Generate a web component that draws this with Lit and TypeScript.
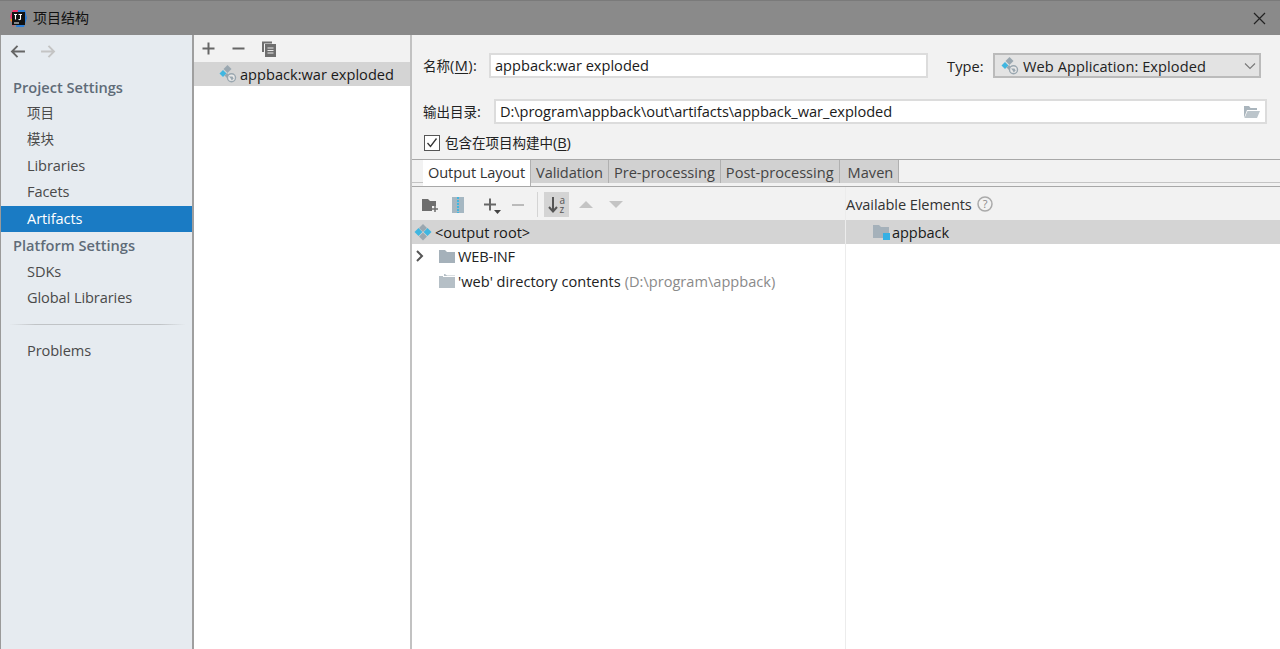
import { LitElement, html, css, svg } from "lit";
import { customElement } from "lit/decorators.js";

const artifactIcon = (globe: boolean) => html`<svg class="ai" width="18" height="18" viewBox="0 0 18 18">
  ${globe
    ? svg`<path d="M8.500 0 12.500 4 8.500 8 4.500 4z" fill="#9aa7b0"/>
          <path d="M4 5 7.500 8.500 4 12 .5 8.500z" fill="#40b6e0"/>
          <path d="M8 8 10.500 10.500 8 13 5.500 10.500z" fill="#9aa7b0"/>
          <circle cx="12.500" cy="12.800" r="4.700" fill="#9aa7b0"/><circle cx="12.500" cy="12.800" r="3.300" fill="#e8e8e8"/>
          <path d="M10 11.500h3.500l1.200 2-2 2-1-2z" fill="#9aa7b0"/>`
    : svg`<path d="M9 1 13 5 9 9 5 5z" fill="#9aa7b0"/>
          <path d="M4.500 5 8.500 9 4.500 13 .5 9z" fill="#40b6e0"/>
          <path d="M13.500 5 17.500 9 13.500 13 9.500 9z" fill="#40b6e0"/>
          <path d="M9 9.500 13 13.500 9 17.500 5 13.500z" fill="#9aa7b0"/>`}
</svg>`;

const folder = () => html`<svg width="18" height="16" viewBox="0 0 18 16">
  <path d="M1 2h6l2 2h8v11H1z" fill="#a5b1ba"/>
</svg>`;

const copyIcon = html`<svg width="16" height="16" viewBox="0 0 16 16" fill="none">
  <path d="M2 11V1.500h9" stroke="#6e6e6e" stroke-width="2"/>
  <rect x="4" y="3" width="11" height="13" fill="#6e6e6e"/>
  <path d="M6.500 7h6M6.500 9.500h6M6.500 12h6" stroke="#e9e9e9"/>
</svg>`;

@customElement("app-root")
export class AppRoot extends LitElement {
  static styles = css`
    :host {
      display: flex;
      flex-direction: column;
      width: 1280px;
      height: 649px;
      overflow: hidden;
      background: #f2f2f2;
      color: #222;
      font: 14.6px/20px "Open Sans", "Noto Sans CJK SC", sans-serif;
      letter-spacing: -0.1px;
    }
    .cjk { font-size: 13.5px; letter-spacing: 0; }
    .title {
      height: 35px;
      flex: none;
      background: #8a8a8a;
      display: flex;
      align-items: center;
      padding: 0 14px 0 10px;
      gap: 6px;
      color: #111;
      font-size: 14px;
      letter-spacing: 0;
      box-sizing: border-box;
      border-top: 1px solid #7a7a7a;
    }
    .title .name { flex: 1; }
    .main { flex: 1; display: flex; min-height: 0; border-left: 1px solid #9a9a9a; }
    .side {
      width: 191px;
      flex: none;
      background: #e6ebf0;
      border-right: 2px solid #9f9f9f;
      display: flex;
      flex-direction: column;
    }
    .nav { height: 31px; box-sizing: border-box; padding: 2px 0 0 9px; display: flex; align-items: center; gap: 14px; margin-bottom: 9px; }
    .hd { height: 26px; line-height: 24px; padding-left: 12px; font-weight: 600; color: #5f6b78; letter-spacing: 0; }
    .it { height: 26px; line-height: 24px; padding-left: 26px; color: #4a4a4a; }
    .it.sel { background: #1a7bc4; color: #fff; margin: 1px 0; }
    .sep { height: 1px; background: linear-gradient(90deg, #e6ebf0, #c0c3c6 15%, #c0c3c6 85%, #e6ebf0); margin: 13px 6px 13px 8px; }
    .mid { width: 216px; flex: none; background: #fff; border-right: 2px solid #c2c2c2; display: flex; flex-direction: column; }
    .tb { height: 27px; background: #f2f2f2; display: flex; align-items: center; gap: 15px; padding-left: 7px; }
    .row-sel { height: 24px; background: #d4d4d4; display: flex; align-items: center; color: #1a1a1a; }
    .mid .row-sel { padding-left: 25px; gap: 3px; letter-spacing: 0; }
    .right { flex: 1; display: flex; flex-direction: column; min-width: 0; }
    .form { height: 124px; flex: none; padding: 18px 13px 0 11px; box-sizing: border-box; }
    .line { display: flex; align-items: center; height: 25px; }
    .lab { flex: none; }
    .a .lab { width: 66px; letter-spacing: 0.4px; }
    .b .lab { width: 71px; }
    .input { height: 25px; box-sizing: border-box; border: 2px solid #dcdcdc; background: #fff; line-height: 21px; padding-left: 4px; color: #1a1a1a; letter-spacing: 0; }
    .a .input { width: 439px; }
    .type { margin-left: 19px; width: 46px; flex: none; letter-spacing: 0.1px; }
    .combo { width: 268px; height: 25px; box-sizing: border-box; background: #e3e3e3; border: 2px solid #bbb; display: flex; align-items: center; padding: 0 3px 0 6px; gap: 4px; letter-spacing: 0.06px; }
    .combo span { flex: 1; }
    .b { margin-top: 21px; }
    .b .input { flex: 1; display: flex; align-items: center; justify-content: space-between; padding-right: 5px; letter-spacing: -0.06px; }
    .chk { margin-top: 8px; display: flex; align-items: center; gap: 5px; }
    .box { width: 14px; height: 14px; border: 1px solid #555; background: #fff; display: flex; margin-left: 1px; }
    .tabs {
      height: 28px; flex: none; box-sizing: border-box;
      border-top: 1px solid #a8a8a8; border-bottom: 1px solid #a8a8a8;
      background: linear-gradient(#c4c4c4, #c4c4c4) 0 22px / 100% 1px no-repeat;
      padding-left: 11px; display: flex; align-items: flex-start; letter-spacing: 0;
    }
    .tab { height: 23px; line-height: 24px; padding: 0 5px; background: #d1d1d1; color: #444; border-right: 1px solid #b0b0b0; }
    .tab.on { background: #fff; color: #333; height: 26px; letter-spacing: -0.1px; }
    .tab.vd { letter-spacing: -0.1px; }
    .tab.mv { padding: 0 5px 0 8px; }
    .layout { flex: 1; min-height: 0; display: flex; }
    .l { width: 433px; flex: none; background: #fff; border-right: 1px solid #ececec; display: flex; flex-direction: column; }
    .r { flex: 1; background: #fff; display: flex; flex-direction: column; }
    .tb2 { height: 33px; box-sizing: border-box; flex: none; background: #f2f2f2; display: flex; align-items: center; padding-left: 9px; }
    .tb2.ic { padding-top: 2px; }
    .tb2 > .m12 { margin-left: 12px; }
    .tb2 > .m18 { margin-left: 18px; }
    .tb2 > .m8 { margin-left: 8px; }
    .tb2 > .m7 { margin-left: 6px; }
    .tb2 > .m9 { margin-left: 9px; }
    .tb2 > .m14 { margin-left: 14px; }
    .tb2.r2 { padding-left: 0; gap: 5px; color: #333; }
    .sort { background: #d4d4d4; width: 25px; height: 25px; display: flex; align-items: center; justify-content: center; }
    .vsep { width: 1px; height: 25px; background: #d4d4d4; }
    .l .row-sel { padding-left: 2px; gap: 3px; letter-spacing: 0; }
    .r .row-sel { padding-left: 26px; }
    .tr { height: 25px; box-sizing: border-box; padding: 0 0 2px 3px; display: flex; align-items: center; color: #222; letter-spacing: 0; }
    .tr .sp { width: 23px; display: flex; }
    .tr .txt { margin-left: 2px; }
    .tr .wi { letter-spacing: -0.2px; }
    .gray { color: #8a8a8a; margin-left: 4px; }
    u { text-underline-offset: 2px; }
    .ov { overflow: visible; }
  `;

  render() {
    return html`
      <div class="title">
        <svg width="17" height="17" viewBox="0 0 17 17">
          <path d="M0 6 3 0h6L3 17z" fill="#f0386b"/><path d="M8 0h7l2 8-3 9H6z" fill="#2a7dd8"/><path d="M0 10l4-3v7z" fill="#f58a1f"/>
          <rect x="2" y="2" width="13" height="13" fill="#111"/>
          <path d="M4 4.500h3M5.500 4.500v5M8.500 4.500h3.500M10.500 4.500v4.500q0 .8-2 .5" stroke="#fff" fill="none" stroke-width="1.100"/>
          <path d="M4 13h5" stroke="#fff"/>
        </svg>
        <span class="name">项目结构</span>
        <svg width="13" height="13" viewBox="0 0 13 13"><path d="M1 1l11 11M12 1 1 12" stroke="#222" stroke-width="1.200"/></svg>
      </div>
      <div class="main">
        <div class="side">
          <div class="nav">
            <svg width="16" height="13" viewBox="0 0 17 14" fill="none" stroke="#666" stroke-width="2"><path d="M16 7H2M8 1 2 7l6 6"/></svg>
            <svg width="16" height="13" viewBox="0 0 17 14" fill="none" stroke="#c4c4c4" stroke-width="2"><path d="M1 7h14M9 1l6 6-6 6"/></svg>
          </div>
          <div class="hd">Project Settings</div>
          <div class="it cjk">项目</div>
          <div class="it cjk">模块</div>
          <div class="it">Libraries</div>
          <div class="it">Facets</div>
          <div class="it sel">Artifacts</div>
          <div class="hd">Platform Settings</div>
          <div class="it">SDKs</div>
          <div class="it">Global Libraries</div>
          <div class="sep"></div>
          <div class="it">Problems</div>
        </div>
        <div class="mid">
          <div class="tb">
            <svg width="15" height="15" viewBox="0 0 15 15"><path d="M7.500 1.500v12M1.500 7.500h12" stroke="#666" stroke-width="2"/></svg>
            <svg width="15" height="15" viewBox="0 0 15 15"><path d="M1.500 7.500h12" stroke="#666" stroke-width="2"/></svg>
            ${copyIcon}
          </div>
          <div class="row-sel">${artifactIcon(true)}<span>appback:war exploded</span></div>
        </div>
        <div class="right">
          <div class="form">
            <div class="line a">
              <span class="lab"><span class="cjk">名称</span>(<u>M</u>):</span>
              <div class="input">appback:war exploded</div>
              <span class="type">Type:</span>
              <div class="combo">${artifactIcon(true)}<span>Web Application: Exploded</span>
                <svg width="12" height="8" viewBox="0 0 12 8" fill="none" stroke="#777" stroke-width="1.100"><path d="M1 1.500l5 5 5-5"/></svg>
              </div>
            </div>
            <div class="line b">
              <span class="lab"><span class="cjk">输出目录</span>:</span>
              <div class="input">D:\\program\\appback\\out\\artifacts\\appback_war_exploded
                <svg width="17" height="14" viewBox="0 0 17 14"><path d="M1 1h5l1.500 2H14v2H4L1 13z" fill="#aab5bd"/><path d="M4.500 6H17l-3 7H1.500z" fill="#bcc5cb"/></svg>
              </div>
            </div>
            <div class="chk">
              <div class="box"><svg width="14" height="14" viewBox="0 0 14 14" fill="none" stroke="#333" stroke-width="1.300"><path d="M2.500 7l3 3.500 6-8"/></svg></div>
              <span><span class="cjk">包含在项目构建中</span>(<u>B</u>)</span>
            </div>
          </div>
          <div class="tabs">
            <div class="tab on">Output Layout</div>
            <div class="tab vd">Validation</div>
            <div class="tab">Pre-processing</div>
            <div class="tab">Post-processing</div>
            <div class="tab mv">Maven</div>
          </div>
          <div class="layout">
            <div class="l">
              <div class="tb2 ic">
                <svg width="18" height="16" viewBox="0 0 18 16"><path d="M1 2h6l2 2h6v5h-4v5H1z" fill="#6e6e6e"/><path d="M14 9v6M11 12h6" stroke="#6e6e6e" stroke-width="1.500"/></svg>
                <svg class="m12" width="14" height="18" viewBox="0 0 14 18"><rect x="1" y="1" width="12" height="16" fill="#a5b7c2"/><path d="M7 1v16" stroke="#40b6e0" stroke-width="2" stroke-dasharray="2 1"/></svg>
                <svg class="m18" width="20" height="18" viewBox="0 0 20 18"><path d="M7 2.500v12M1 8.500h12" stroke="#666" stroke-width="2"/><path d="M11 14h7l-3.500 4z" fill="#444"/></svg>
                <svg class="m8" width="14" height="14" viewBox="0 0 14 14"><path d="M1 7h12" stroke="#bbb" stroke-width="2"/></svg>
                <div class="vsep m12"></div>
                <div class="sort m7">
                  <svg class="ov" width="20" height="20" viewBox="0 0 20 20"><path d="M6 2v14M2 12l4 4.500 4-4.500" fill="none" stroke="#555" stroke-width="2"/><text x="12.500" y="8.500" font-size="10" fill="#555" font-family="Open Sans">a</text><text x="12.500" y="18" font-size="10" fill="#555" font-family="Open Sans">z</text></svg>
                </div>
                <svg class="m9" width="16" height="9" viewBox="0 0 16 9"><path d="M8 1l7 7H1z" fill="#c4c4c4"/></svg>
                <svg class="m14" width="16" height="9" viewBox="0 0 16 9"><path d="M8 8l7-7H1z" fill="#c4c4c4"/></svg>
              </div>
              <div class="row-sel">${artifactIcon(false)}<span>&lt;output root&gt;</span></div>
              <div class="tr">
                <span class="sp"><svg width="10" height="12" viewBox="0 0 10 12" fill="none" stroke="#555" stroke-width="2"><path d="M2 1l5 5-5 5"/></svg></span>
                ${folder()}<span class="txt wi">WEB-INF</span>
              </div>
              <div class="tr">
                <span class="sp"></span>
                <svg width="18" height="16" viewBox="0 0 18 16"><path d="M1 3h5V1h1l2 1.500h8V15H1z" fill="#b5bfc6"/><path d="M5 3h12v1H5z" fill="#fff"/></svg>
                <span class="txt">'web' directory contents</span><span class="gray">(D:\\program\\appback)</span>
              </div>
            </div>
            <div class="r">
              <div class="tb2 r2">Available Elements
                <svg width="16" height="16" viewBox="0 0 16 16" fill="none"><circle cx="8" cy="8" r="7" stroke="#aaa" stroke-width="1.500"/><text x="8" y="12" font-size="11" fill="#888" text-anchor="middle" font-family="Open Sans">?</text></svg>
              </div>
              <div class="row-sel">
                <svg width="20" height="18" viewBox="0 0 20 18"><path d="M1 2h6l2 2h8v11H1z" fill="#a5b1ba"/><rect x="11" y="10" width="7" height="7" fill="#35b0e4"/></svg>
                <span>appback</span>
              </div>
            </div>
          </div>
        </div>
      </div>
    `;
  }
}
